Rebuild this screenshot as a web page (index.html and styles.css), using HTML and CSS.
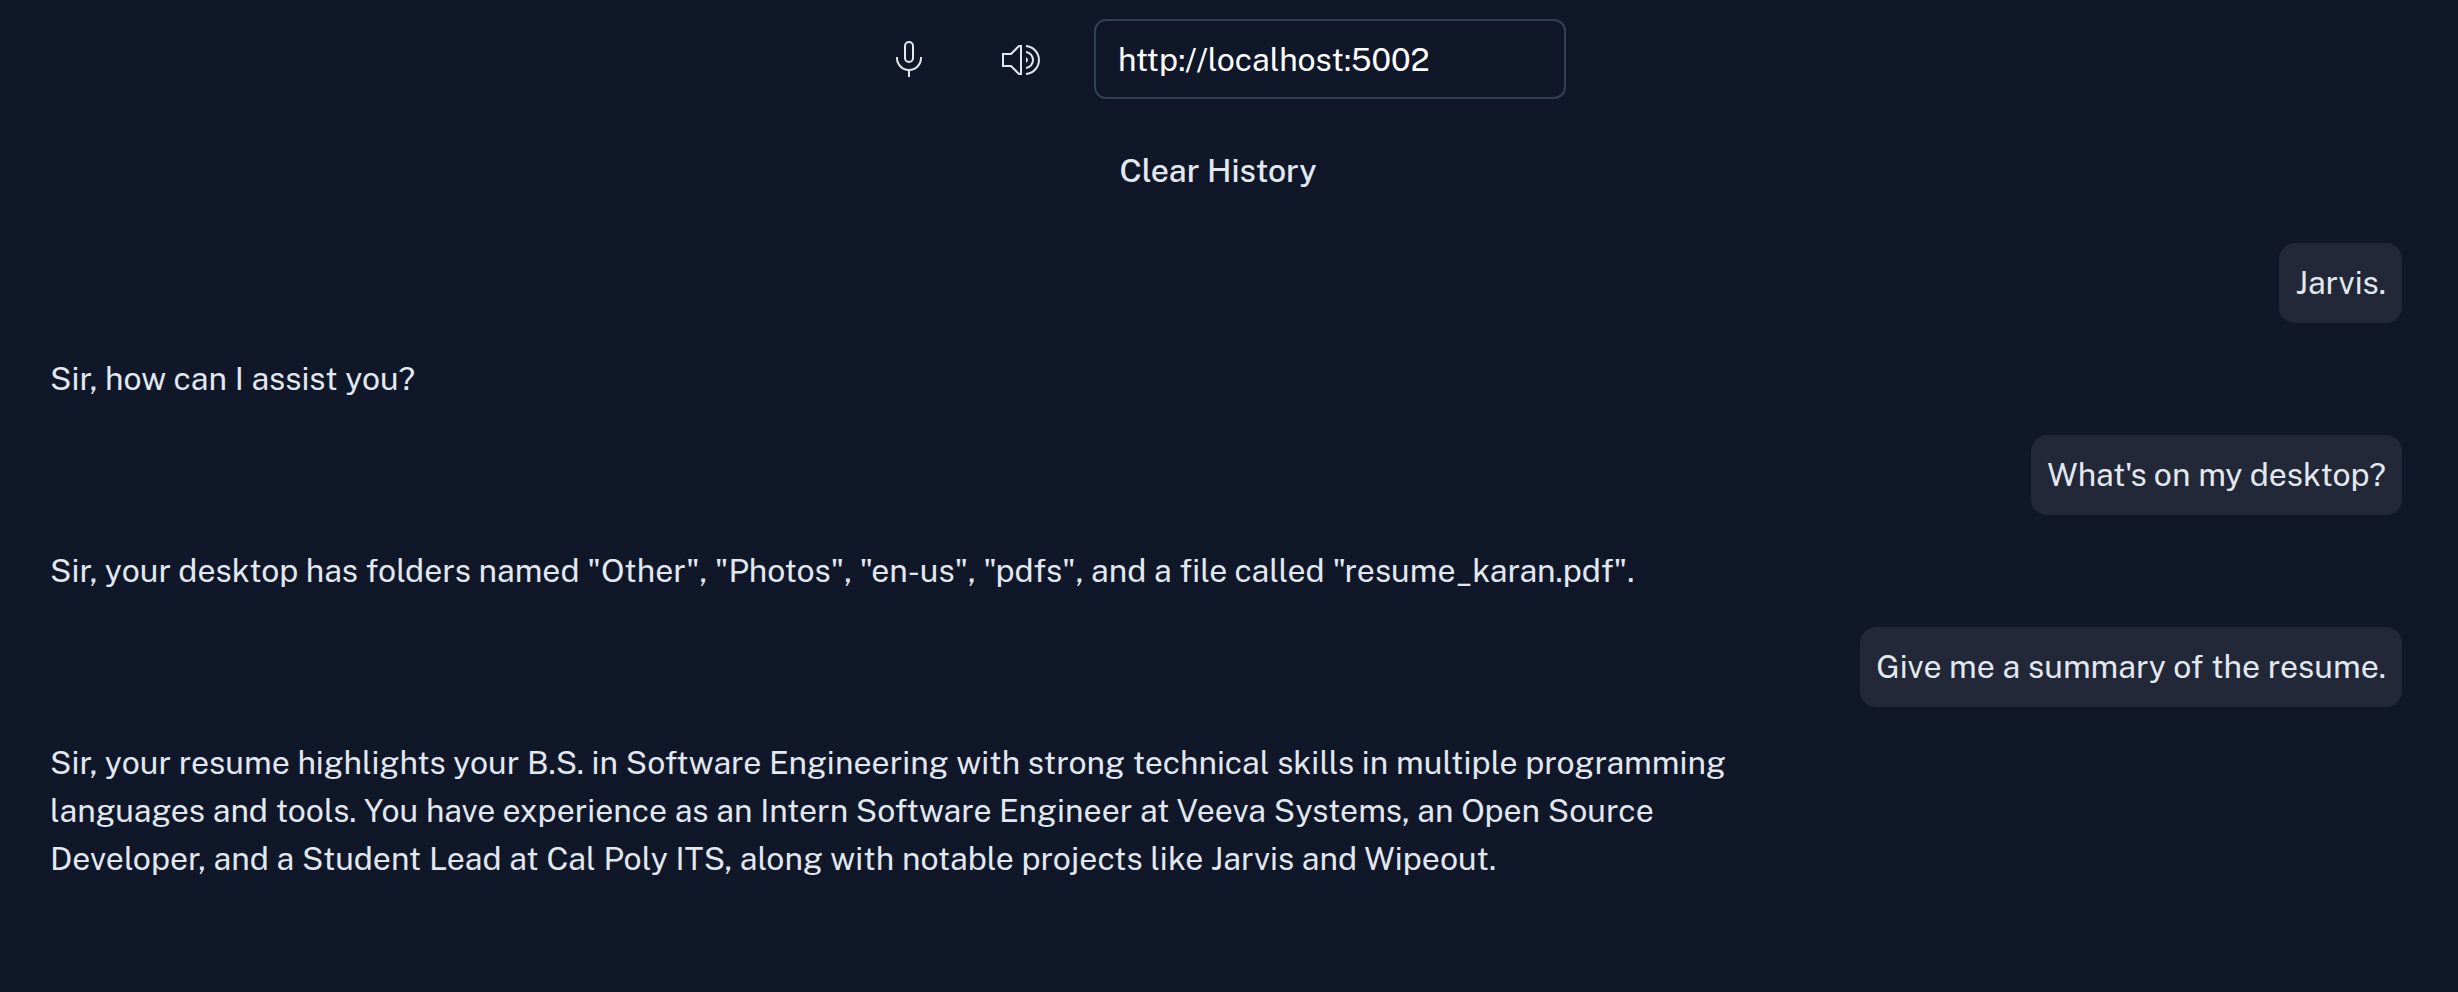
FILE: index.html
```html
<!DOCTYPE html>
<html lang="en">
<head>
<meta charset="utf-8">
<meta name="viewport" content="width=device-width, initial-scale=1">
<title>Jarvis</title>
<link rel="stylesheet" href="styles.css">
</head>
<body>
<main class="chat">
  <header class="controls">
    <div class="toolbar">
      <button class="icon-button" type="button" aria-label="Microphone">
        <svg class="icon" viewBox="1 0 40 40" aria-hidden="true">
          <rect x="16" y="3" width="8" height="20" rx="4"/>
          <path d="M8 18v1a12 12 0 0 0 24 0v-1M20 31v7"/>
        </svg>
      </button>
      <button class="icon-button" type="button" aria-label="Sound">
        <svg class="icon" viewBox="1 0 40 40" aria-hidden="true">
          <path d="M2 15h8l8-8h2v28h-2l-8-8H2z"/>
          <path d="M25 7.04a14 14 0 0 1 0 27.92M25 13.06a8 8 0 0 1 0 15.88"/>
          <path class="icon-fill" d="M25 18.2a3 3 0 0 1 0 5.6z"/>
        </svg>
      </button>
      <input class="server-url" type="text" aria-label="Server URL" value="http://localhost:5002">
    </div>
    <button class="clear-button" type="button">Clear History</button>
  </header>
  <section class="messages" aria-label="Conversation">
    <p class="message message-user">Jarvis.</p>
    <p class="message">Sir, how can I assist you?</p>
    <p class="message message-user">What's on my desktop?</p>
    <p class="message">Sir, your desktop has folders named "Other", "Photos", "en-us", "pdfs", and a file called "resume_karan.pdf".</p>
    <p class="message message-user">Give me a summary of the resume.</p>
    <p class="message">Sir, your resume highlights your B.S. in Software Engineering with strong technical skills in multiple programming languages and tools. You have experience as an Intern Software Engineer at Veeva Systems, an Open Source Developer, and a Student Lead at Cal Poly ITS, along with notable projects like Jarvis and Wipeout.</p>
  </section>
</main>
</body>
</html>
```
FILE: styles.css
```css
* {
  box-sizing: border-box;
}

body {
  margin: 0;
  padding: 0 24px 0 2px;
  background: #101728;
  color: #e2e8f0;
  font-family: "Public Sans", Inter, sans-serif;
  font-size: 32px;
  line-height: 48px;
}

.chat {
  display: flex;
  flex-direction: column;
  gap: 32px;
  padding: 19px 32px 32px;
}

.controls {
  display: flex;
  flex-direction: column;
  align-items: center;
  gap: 32px;
}

.toolbar {
  display: flex;
  align-items: center;
  gap: 32px;
}

.icon-button,
.clear-button {
  height: 80px;
  border: 0;
  border-radius: 12px;
  background: transparent;
  color: inherit;
  font: inherit;
  font-weight: 500;
  cursor: pointer;
}

.icon-button {
  display: flex;
  align-items: center;
  justify-content: center;
  width: 80px;
  padding: 0;
}

.clear-button {
  padding: 0 32px;
}

.icon {
  width: 40px;
  height: 40px;
  fill: none;
  stroke: currentColor;
  stroke-width: 2;
}

.icon-fill {
  fill: currentColor;
  stroke: none;
}

.server-url {
  width: 472px;
  height: 80px;
  padding: 0 22px;
  border: 2px solid #334155;
  border-radius: 12px;
  background: transparent;
  color: #fff;
  font: inherit;
}

.messages {
  display: flex;
  flex-direction: column;
  align-items: flex-start;
  gap: 16px;
}

.message {
  max-width: 75%;
  margin: 0;
  padding: 16px;
  border-radius: 16px;
}

.message-user {
  align-self: flex-end;
  background: #222837;
}
```
